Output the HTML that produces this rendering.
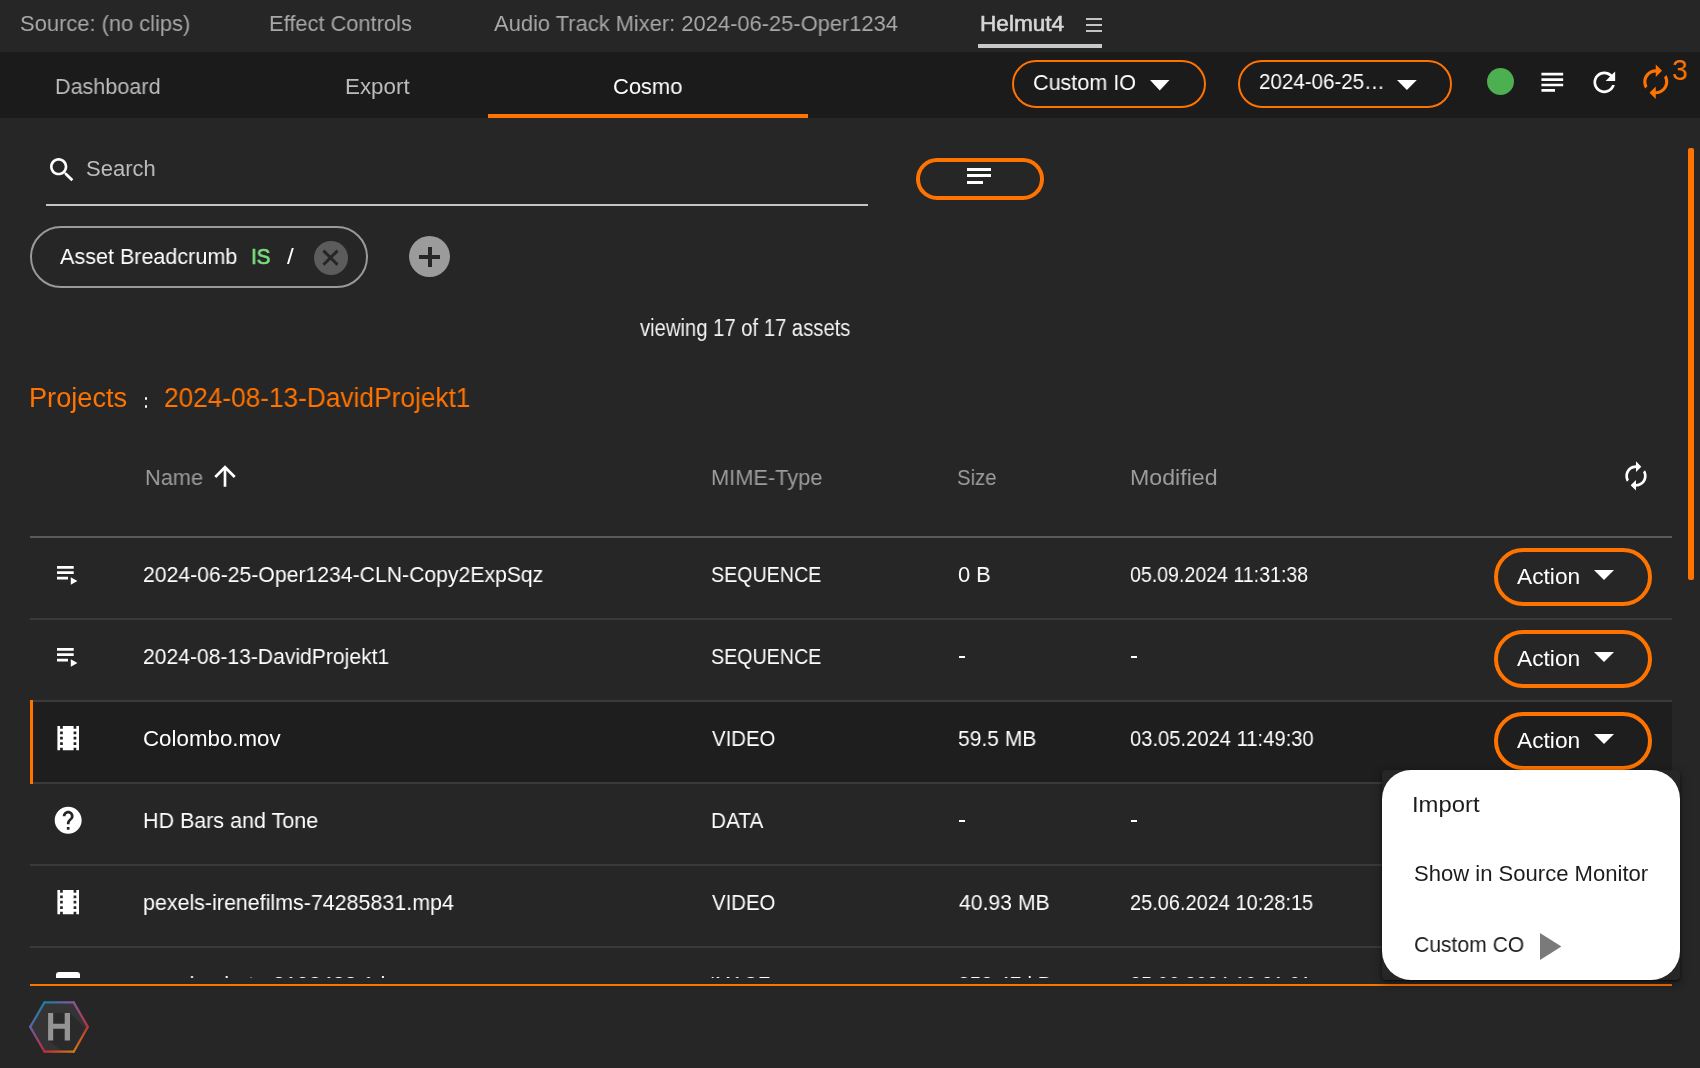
<!DOCTYPE html>
<html><head><meta charset="utf-8"><style>
html,body{margin:0;padding:0;}
body{width:1700px;height:1068px;overflow:hidden;background:#262626;position:relative;font-family:"Liberation Sans",sans-serif;}
.t{position:absolute;white-space:nowrap;transform-origin:0 0;will-change:transform;}
.r{position:absolute;display:block;}
.clip{position:absolute;left:0;top:0;width:1700px;height:978px;overflow:hidden;}
</style></head><body>
<div class="r" style="left:0px;top:0px;width:1700px;height:52px;background:#262626;"></div>
<div class="t" style="left:19.60px;top:13.38px;font-size:22px;line-height:22px;color:#a8a8a8;transform:scaleX(0.9953);">Source: (no clips)</div>
<div class="t" style="left:269.01px;top:13.38px;font-size:22px;line-height:22px;color:#a8a8a8;transform:scaleX(0.9930);">Effect Controls</div>
<div class="t" style="left:494.00px;top:13.38px;font-size:22px;line-height:22px;color:#a8a8a8;transform:scaleX(0.9951);">Audio Track Mixer: 2024-06-25-Oper1234</div>
<div class="t" style="left:980.47px;top:13.38px;font-size:22px;line-height:22px;color:#d6d6d6;transform:scaleX(1.0272);-webkit-text-stroke:0.6px #d6d6d6;">Helmut4</div>
<div class="r" style="left:1086px;top:18px;width:16px;height:2px;background:#c4c4c4;"></div>
<div class="r" style="left:1086px;top:24px;width:16px;height:2px;background:#c4c4c4;"></div>
<div class="r" style="left:1086px;top:30px;width:16px;height:2px;background:#c4c4c4;"></div>
<div class="r" style="left:978px;top:44px;width:124px;height:4px;background:#c8c8c8;"></div>
<div class="r" style="left:0px;top:52px;width:1700px;height:66px;background:#1b1b1b;"></div>
<div class="t" style="left:55.22px;top:75.88px;font-size:22px;line-height:22px;color:#bcbcbc;transform:scaleX(0.9811);">Dashboard</div>
<div class="t" style="left:344.98px;top:75.88px;font-size:22px;line-height:22px;color:#bcbcbc;transform:scaleX(1.0159);">Export</div>
<div class="t" style="left:612.80px;top:75.88px;font-size:22px;line-height:22px;color:#ffffff;transform:scaleX(0.9956);">Cosmo</div>
<div class="r" style="left:488px;top:114px;width:320px;height:4px;background:#ff7300;"></div>
<div class="r" style="left:1012px;top:60px;width:194px;height:48px;box-sizing:border-box;border:2px solid #ff7300;border-radius:24px;background:transparent;"></div>
<div class="t" style="left:1032.92px;top:71.58px;font-size:22px;line-height:22px;color:#fff;transform:scaleX(0.9796);">Custom IO</div>
<svg class="r" style="left:1150px;top:79.6px;" width="20" height="11" viewBox="0 0 20 11"><path d="M0 0H19.5L9.75 10.6Z" fill="#fff"/></svg>
<div class="r" style="left:1238px;top:60px;width:214px;height:48px;box-sizing:border-box;border:2px solid #ff7300;border-radius:24px;background:transparent;"></div>
<div class="t" style="left:1258.67px;top:71.48px;font-size:22px;line-height:22px;color:#fff;transform:scaleX(0.9344);">2024-06-25…</div>
<svg class="r" style="left:1396.5px;top:79.8px;" width="20" height="11" viewBox="0 0 20 11"><path d="M0 0H19.8L9.9 10Z" fill="#fff"/></svg>
<div class="r" style="left:1486.8px;top:68.4px;width:27px;height:27px;box-sizing:border-box;border:none;border-radius:14px;background:#4caf50;"></div>
<svg class="r" style="left:1536px;top:66px;" width="32.6" height="32.6" viewBox="0 0 24 24"><path fill="#fff" d="M14 17H4v2h10v-2zm6-8H4v2h16V9zM4 15h16v-2H4v2zM4 5v2h16V5H4z"/></svg>
<svg class="r" style="left:1588.4px;top:65.8px;" width="32.6" height="32.6" viewBox="0 0 24 24"><path fill="#fff" d="M17.65 6.35C16.2 4.9 14.21 4 12 4c-4.42 0-7.99 3.58-7.99 8s3.57 8 7.99 8c3.73 0 6.84-2.55 7.73-6h-2.08c-.82 2.33-3.04 4-5.65 4-3.31 0-6-2.69-6-6s2.69-6 6-6c1.66 0 3.14.69 4.22 1.78L13 11h7V4l-2.35 2.35z"/></svg>
<svg class="r" style="left:1636.9454545454546px;top:63.03636363636363px;" width="37.52727272727273" height="37.52727272727273" viewBox="0 0 24 24"><path fill="#ff7300" transform="translate(24 0) scale(-1 1)" d="M12 4V1L8 5l4 4V6c3.31 0 6 2.69 6 6 0 1.01-.25 1.97-.7 2.8l1.46 1.46C19.54 15.03 20 13.57 20 12c0-4.42-3.58-8-8-8zm0 14c-3.31 0-6-2.69-6-6 0-1.01.25-1.97.7-2.8L5.24 7.74C4.46 8.97 4 10.43 4 12c0 4.42 3.58 8 8 8v3l4-4-4-4v3z"/></svg>
<div class="t" style="left:1672.02px;top:55.75px;font-size:29px;line-height:29px;color:#ff7300;transform:scaleX(0.9786);">3</div>
<svg class="r" style="left:45.8px;top:153.7px;" width="32" height="32" viewBox="0 0 24 24"><path fill="#fff" d="M15.5 14h-.79l-.28-.27C15.41 12.59 16 11.11 16 9.5 16 5.91 13.09 3 9.5 3S3 5.91 3 9.5 5.91 16 9.5 16c1.61 0 3.09-.59 4.23-1.57l.27.28v.79l5 4.99L20.49 19l-4.99-5zm-6 0C7.01 14 5 11.99 5 9.5S7.01 5 9.5 5 14 7.01 14 9.5 11.99 14 9.5 14z"/></svg>
<div class="t" style="left:85.50px;top:158.18px;font-size:22px;line-height:22px;color:#bdbdbd;transform:scaleX(0.9985);">Search</div>
<div class="r" style="left:46px;top:204px;width:822px;height:2px;background:#c4c4c4;"></div>
<div class="r" style="left:916px;top:158px;width:128px;height:42px;box-sizing:border-box;border:4px solid #ff7300;border-radius:21px;background:transparent;"></div>
<div class="r" style="left:966.7px;top:167.6px;width:24.5px;height:3.2px;background:#fff;"></div>
<div class="r" style="left:966.7px;top:174.3px;width:24.5px;height:3.2px;background:#fff;"></div>
<div class="r" style="left:966.7px;top:180.9px;width:16.5px;height:3.2px;background:#fff;"></div>
<div class="r" style="left:30px;top:226px;width:338px;height:62px;box-sizing:border-box;border:2px solid #9a9a9a;border-radius:31px;background:transparent;"></div>
<div class="t" style="left:60.10px;top:245.58px;font-size:22px;line-height:22px;color:#fff;transform:scaleX(0.9794);">Asset Breadcrumb</div>
<div class="t" style="left:251.42px;top:245.88px;font-size:22px;line-height:22px;color:#7ddf80;transform:scaleX(0.9389);-webkit-text-stroke:0.7px #7ddf80;">IS</div>
<div class="t" style="left:286.90px;top:245.88px;font-size:22px;line-height:22px;color:#fff;transform:scaleX(1.1000);">/</div>
<div class="r" style="left:314px;top:241.1px;width:33.5px;height:33.5px;box-sizing:border-box;border:none;border-radius:17px;background:#5c5c5c;"></div>
<svg class="r" style="left:314px;top:241.1px;" width="33.5" height="33.5" viewBox="0 0 33.5 33.5"><path d="M9.4 9.6L23.6 23.8M23.6 9.6L9.4 23.8" stroke="#262626" stroke-width="3"/></svg>
<div class="r" style="left:408.6px;top:235.9px;width:41.5px;height:41.5px;box-sizing:border-box;border:none;border-radius:21px;background:#9b9b9b;"></div>
<div class="r" style="left:419.2px;top:255px;width:20.8px;height:4px;background:#262626;"></div>
<div class="r" style="left:427.5px;top:246.8px;width:4px;height:20.4px;background:#262626;"></div>
<div class="t" style="left:639.90px;top:316.73px;font-size:23px;line-height:23px;color:#f2f2f2;transform:scaleX(0.8799);">viewing 17 of 17 assets</div>
<div class="t" style="left:29.49px;top:385.04px;font-size:27px;line-height:27px;color:#ff7300;transform:scaleX(1.0063);">Projects</div>
<div class="r" style="left:144.8px;top:397.2px;width:2.7px;height:2.7px;background:#fff;border-radius:1.4px;"></div>
<div class="r" style="left:144.8px;top:405.3px;width:2.7px;height:2.7px;background:#fff;border-radius:1.4px;"></div>
<div class="t" style="left:164.33px;top:385.04px;font-size:27px;line-height:27px;color:#ff7300;transform:scaleX(0.9719);">2024-08-13-DavidProjekt1</div>
<div class="t" style="left:144.61px;top:467.38px;font-size:22px;line-height:22px;color:#9c9c9c;transform:scaleX(0.9895);">Name</div>
<svg class="r" style="left:208.7px;top:459.8px;" width="32" height="32" viewBox="0 0 24 24"><path fill="#fff" d="M4 12l1.41 1.41L11 7.83V20h2V7.83l5.58 5.59L20 12l-8-8-8 8z"/></svg>
<div class="t" style="left:711.41px;top:467.38px;font-size:22px;line-height:22px;color:#9c9c9c;transform:scaleX(0.9910);">MIME-Type</div>
<div class="t" style="left:957.48px;top:467.38px;font-size:22px;line-height:22px;color:#9c9c9c;transform:scaleX(0.9244);">Size</div>
<div class="t" style="left:1129.65px;top:467.38px;font-size:22px;line-height:22px;color:#9c9c9c;transform:scaleX(1.0531);">Modified</div>
<svg class="r" style="left:1619.5727272727274px;top:459.96818181818185px;" width="31.963636363636375" height="31.963636363636375" viewBox="0 0 24 24"><path fill="#fff" transform="translate(24 0) scale(-1 1)" d="M12 4V1L8 5l4 4V6c3.31 0 6 2.69 6 6 0 1.01-.25 1.97-.7 2.8l1.46 1.46C19.54 15.03 20 13.57 20 12c0-4.42-3.58-8-8-8zm0 14c-3.31 0-6-2.69-6-6 0-1.01.25-1.97.7-2.8L5.24 7.74C4.46 8.97 4 10.43 4 12c0 4.42 3.58 8 8 8v3l4-4-4-4v3z"/></svg>
<div class="r" style="left:30px;top:536px;width:1642px;height:2px;background:#5a5a5a;"></div>
<div class="r" style="left:30px;top:702px;width:1642px;height:80px;background:#1e1e1e;"></div>
<div class="r" style="left:30px;top:618px;width:1642px;height:2px;background:#3a3a3a;"></div>
<div class="r" style="left:30px;top:700px;width:1642px;height:2px;background:#3a3a3a;"></div>
<div class="r" style="left:30px;top:782px;width:1642px;height:2px;background:#3a3a3a;"></div>
<div class="r" style="left:30px;top:864px;width:1642px;height:2px;background:#3a3a3a;"></div>
<div class="r" style="left:30px;top:946px;width:1642px;height:2px;background:#3a3a3a;"></div>
<div class="r" style="left:30px;top:700px;width:2.5px;height:84px;background:#ff7300;"></div>
<div class="clip"><svg class="r" style="left:56.8px;top:565.9px;" width="21" height="19" viewBox="0 0 21 19"><path fill="#fff" d="M0 0h16.7v2.7H0zM0 5.3h16.7v2.7H0zM0 10.7h11v2.7H0zM13.8 11.3l6.6 3.75-6.6 3.75z"/></svg><div class="t" style="left:143.04px;top:563.68px;font-size:22px;line-height:22px;color:#fff;transform:scaleX(0.9626);">2024-06-25-Oper1234-CLN-Copy2ExpSqz</div><div class="t" style="left:711.11px;top:563.68px;font-size:22px;line-height:22px;color:#fff;transform:scaleX(0.8934);">SEQUENCE</div><div class="t" style="left:957.51px;top:563.68px;font-size:22px;line-height:22px;color:#fff;transform:scaleX(0.9935);">0 B</div><div class="t" style="left:1129.61px;top:563.68px;font-size:22px;line-height:22px;color:#fff;transform:scaleX(0.8894);">05.09.2024 11:31:38</div><div class="r" style="left:1494px;top:547.6px;width:158px;height:58px;box-sizing:border-box;border:4px solid #ff7300;border-radius:29px;background:transparent;"></div><div class="t" style="left:1517.00px;top:566.38px;font-size:22px;line-height:22px;color:#fff;transform:scaleX(1.0333);">Action</div><svg class="r" style="left:1594px;top:570px;" width="20" height="10" viewBox="0 0 20 10"><path d="M0 0H20L10 10Z" fill="#fff"/></svg><svg class="r" style="left:56.8px;top:647.9px;" width="21" height="19" viewBox="0 0 21 19"><path fill="#fff" d="M0 0h16.7v2.7H0zM0 5.3h16.7v2.7H0zM0 10.7h11v2.7H0zM13.8 11.3l6.6 3.75-6.6 3.75z"/></svg><div class="t" style="left:143.04px;top:645.68px;font-size:22px;line-height:22px;color:#fff;transform:scaleX(0.9588);">2024-08-13-DavidProjekt1</div><div class="t" style="left:711.11px;top:645.68px;font-size:22px;line-height:22px;color:#fff;transform:scaleX(0.8934);">SEQUENCE</div><div class="r" style="left:958.5px;top:656.3px;width:6px;height:2px;background:#fff;"></div><div class="r" style="left:1130.5px;top:656.3px;width:6px;height:2px;background:#fff;"></div><div class="r" style="left:1494px;top:629.6px;width:158px;height:58px;box-sizing:border-box;border:4px solid #ff7300;border-radius:29px;background:transparent;"></div><div class="t" style="left:1517.00px;top:648.38px;font-size:22px;line-height:22px;color:#fff;transform:scaleX(1.0333);">Action</div><svg class="r" style="left:1594px;top:652px;" width="20" height="10" viewBox="0 0 20 10"><path d="M0 0H20L10 10Z" fill="#fff"/></svg><svg class="r" style="left:51.6px;top:721.95px;" width="32.400000000000006" height="32.400000000000006" viewBox="0 0 24 24"><path fill="#fff" d="M18 3v2h-2V3H8v2H6V3H4v18h2v-2h2v2h8v-2h2v2h2V3h-2zM8 17H6v-2h2v2zm0-4H6v-2h2v2zm0-4H6V7h2v2zm10 8h-2v-2h2v2zm0-4h-2v-2h2v2zm0-4h-2V7h2v2z"/></svg><div class="t" style="left:142.99px;top:727.68px;font-size:22px;line-height:22px;color:#fff;transform:scaleX(1.0141);">Colombo.mov</div><div class="t" style="left:712.00px;top:727.68px;font-size:22px;line-height:22px;color:#fff;transform:scaleX(0.9265);">VIDEO</div><div class="t" style="left:957.54px;top:727.68px;font-size:22px;line-height:22px;color:#fff;transform:scaleX(0.9563);">59.5 MB</div><div class="t" style="left:1129.58px;top:727.68px;font-size:22px;line-height:22px;color:#fff;transform:scaleX(0.9171);">03.05.2024 11:49:30</div><div class="r" style="left:1494px;top:711.6px;width:158px;height:58px;box-sizing:border-box;border:4px solid #ff7300;border-radius:29px;background:transparent;"></div><div class="t" style="left:1517.00px;top:730.38px;font-size:22px;line-height:22px;color:#fff;transform:scaleX(1.0333);">Action</div><svg class="r" style="left:1594px;top:734px;" width="20" height="10" viewBox="0 0 20 10"><path d="M0 0H20L10 10Z" fill="#fff"/></svg><svg class="r" style="left:51.9px;top:803.6999999999999px;" width="32.400000000000006" height="32.400000000000006" viewBox="0 0 24 24"><path fill="#fff" d="M12 2C6.48 2 2 6.48 2 12s4.48 10 10 10 10-4.48 10-10S17.52 2 12 2zm1 17h-2v-2h2v2zm2.07-7.75l-.9.92C13.45 12.9 13 13.5 13 15h-2v-.5c0-1.1.45-2.1 1.17-2.83l1.24-1.26c.37-.36.59-.86.59-1.41 0-1.1-.9-2-2-2s-2 .9-2 2H8c0-2.21 1.79-4 4-4s4 1.79 4 4c0 .88-.36 1.68-.93 2.25z"/></svg><div class="t" style="left:143.02px;top:809.68px;font-size:22px;line-height:22px;color:#fff;transform:scaleX(0.9758);">HD Bars and Tone</div><div class="t" style="left:711.05px;top:809.68px;font-size:22px;line-height:22px;color:#fff;transform:scaleX(0.9455);">DATA</div><div class="r" style="left:958.5px;top:820.3px;width:6px;height:2px;background:#fff;"></div><div class="r" style="left:1130.5px;top:820.3px;width:6px;height:2px;background:#fff;"></div><svg class="r" style="left:51.6px;top:885.95px;" width="32.400000000000006" height="32.400000000000006" viewBox="0 0 24 24"><path fill="#fff" d="M18 3v2h-2V3H8v2H6V3H4v18h2v-2h2v2h8v-2h2v2h2V3h-2zM8 17H6v-2h2v2zm0-4H6v-2h2v2zm0-4H6V7h2v2zm10 8h-2v-2h2v2zm0-4h-2v-2h2v2zm0-4h-2V7h2v2z"/></svg><div class="t" style="left:143.03px;top:891.68px;font-size:22px;line-height:22px;color:#fff;transform:scaleX(0.9739);">pexels-irenefilms-74285831.mp4</div><div class="t" style="left:712.00px;top:891.68px;font-size:22px;line-height:22px;color:#fff;transform:scaleX(0.9265);">VIDEO</div><div class="t" style="left:958.50px;top:891.68px;font-size:22px;line-height:22px;color:#fff;transform:scaleX(0.9624);">40.93 MB</div><div class="t" style="left:1129.59px;top:891.68px;font-size:22px;line-height:22px;color:#fff;transform:scaleX(0.9075);">25.06.2024 10:28:15</div><div class="r" style="left:55.7px;top:971.9px;width:24.3px;height:30px;box-sizing:border-box;border:none;border-radius:3px;background:#fff;"></div><div class="t" style="left:143.02px;top:973.68px;font-size:22px;line-height:22px;color:#fff;transform:scaleX(0.9753);">pexels-photo-3192433.1.jpeg</div><div class="t" style="left:710.29px;top:973.68px;font-size:22px;line-height:22px;color:#fff;transform:scaleX(0.8529);">IMAGE</div><div class="t" style="left:957.56px;top:973.68px;font-size:22px;line-height:22px;color:#fff;transform:scaleX(0.9433);">253.47 kB</div><div class="t" style="left:1129.60px;top:973.68px;font-size:22px;line-height:22px;color:#fff;transform:scaleX(0.8975);">25.06.2024 10:31:01</div></div>
<div class="r" style="left:30px;top:984px;width:1642px;height:2px;background:#ff7300;"></div>
<div class="r" style="left:1688px;top:148px;width:6px;height:432px;background:#ff7300;border-radius:2px;"></div>
<div class="r" style="left:1381.7px;top:770.1px;width:298.5px;height:209.8px;background:#262626;border-radius:4px;box-shadow:0 1px 2px rgba(0,0,0,0.6),0 3px 10px rgba(0,0,0,0.45);"></div>
<div class="r" style="left:1381.7px;top:770.1px;width:298.5px;height:209.8px;background:#fff;border-radius:29px;"></div>
<div class="t" style="left:1412.33px;top:793.58px;font-size:22px;line-height:22px;color:#1c1c1c;transform:scaleX(1.0836);">Import</div>
<div class="t" style="left:1413.50px;top:863.38px;font-size:22px;line-height:22px;color:#1c1c1c;transform:scaleX(1.0026);">Show in Source Monitor</div>
<div class="t" style="left:1413.54px;top:933.58px;font-size:22px;line-height:22px;color:#1c1c1c;transform:scaleX(0.9593);">Custom CO</div>
<svg class="r" style="left:1539.7px;top:932.7px;" width="21.4" height="27" viewBox="0 0 21.4 27"><path d="M0 0L21.4 13.5L0 27Z" fill="#7a7a7a"/></svg>
<svg class="r" style="left:26px;top:998px" width="66" height="58" viewBox="26 998 66 58">
<defs><linearGradient id="g0" x1="44.5" y1="1002.4" x2="73.7" y2="1002.4" gradientUnits="userSpaceOnUse"><stop offset="0" stop-color="#1c7e9c"/><stop offset="1" stop-color="#86589a"/></linearGradient><linearGradient id="g1" x1="73.7" y1="1002.4" x2="87.8" y2="1026.9" gradientUnits="userSpaceOnUse"><stop offset="0" stop-color="#86589a"/><stop offset="1" stop-color="#b8323c"/></linearGradient><linearGradient id="g2" x1="87.8" y1="1026.9" x2="73.7" y2="1051.7" gradientUnits="userSpaceOnUse"><stop offset="0" stop-color="#b8383a"/><stop offset="1" stop-color="#d07a14"/></linearGradient><linearGradient id="g3" x1="73.7" y1="1051.7" x2="44.5" y2="1051.7" gradientUnits="userSpaceOnUse"><stop offset="0" stop-color="#d07a14"/><stop offset="1" stop-color="#c22a3e"/></linearGradient><linearGradient id="g4" x1="44.5" y1="1051.7" x2="30.2" y2="1026.9" gradientUnits="userSpaceOnUse"><stop offset="0" stop-color="#c22a3e"/><stop offset="1" stop-color="#6a5ca2"/></linearGradient><linearGradient id="g5" x1="30.2" y1="1026.9" x2="44.5" y2="1002.4" gradientUnits="userSpaceOnUse"><stop offset="0" stop-color="#5a66a8"/><stop offset="1" stop-color="#1c7e9c"/></linearGradient><clipPath id="hc"><path d="M44.5 1002.4H73.7L87.8 1026.9L73.7 1051.7H44.5L30.2 1026.9Z"/></clipPath></defs>
<path d="M44.5 1002.4H73.7L87.8 1026.9L73.7 1051.7H44.5L30.2 1026.9Z" fill="#343434"/>
<g clip-path="url(#hc)"><path d="M53.2 1013L70 1013L100 1043L100 1060L75 1060L48.1 1040.5Z" fill="#2a2a2a"/></g>
<path d="M44.5 1002.4L73.7 1002.4" stroke="url(#g0)" stroke-width="2.2" stroke-linecap="round"/><path d="M73.7 1002.4L87.8 1026.9" stroke="url(#g1)" stroke-width="2.2" stroke-linecap="round"/><path d="M87.8 1026.9L73.7 1051.7" stroke="url(#g2)" stroke-width="2.2" stroke-linecap="round"/><path d="M73.7 1051.7L44.5 1051.7" stroke="url(#g3)" stroke-width="2.2" stroke-linecap="round"/><path d="M44.5 1051.7L30.2 1026.9" stroke="url(#g4)" stroke-width="2.2" stroke-linecap="round"/><path d="M30.2 1026.9L44.5 1002.4" stroke="url(#g5)" stroke-width="2.2" stroke-linecap="round"/>
<path d="M48.1 1013h5.1v10.7h11.5v-10.7h5.3v27.5h-5.3v-11.8h-11.5v11.8h-5.1z" fill="#949494"/>
</svg>
</body></html>
